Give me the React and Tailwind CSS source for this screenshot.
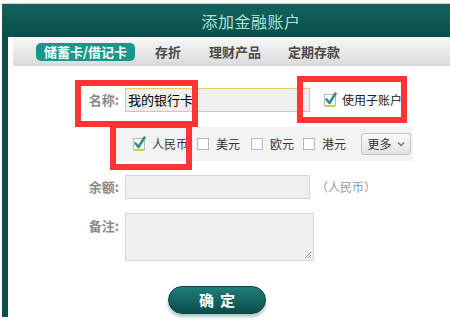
import React from "react";

const font = { fontFamily: '"Noto Sans CJK SC", "Liberation Sans", sans-serif' };

const CheckBox = ({ checked }) => (
    <svg width="12" height="12" viewBox="0 0 12 12" className="shrink-0 overflow-visible">
        <rect x="0.5" y="0.5" width="11" height="11" fill="#fff" stroke="#b8b8b8" />
        {checked && (
            <>
                <line x1="1" y1="12.5" x2="11" y2="12.5" stroke="#c8d84a" strokeWidth="1" />
                <path d="M2.5 5.5 L5.5 9 L11.5 -0.5" fill="none" stroke="#2f8f86" strokeWidth="2.6" strokeLinecap="round" strokeLinejoin="round" />
            </>
        )}
    </svg>
);

const Currency = ({ label, checked, className = "" }) => (
    <label className={`flex items-center gap-[7px] shrink-0 whitespace-nowrap ${className}`}>
        <CheckBox checked={checked} />
        <span className="text-[12px] text-[#333]">{label}</span>
    </label>
);

const App = () => {
    return (
        <div className="w-[450px] h-[327px] bg-white overflow-hidden relative whitespace-nowrap" style={font}>
            <div className="ml-[2px] mt-[3px] border-t border-[#c9d6d4]">
                {/* title bar */}
                <div className="h-[33px] bg-gradient-to-b from-[#14625c] to-[#0a4f4a] flex items-center justify-center pl-[50px]">
                    <span className="text-[16px] text-[#a6e3da] tracking-[0.5px]">添加金融账户</span>
                </div>

                <div className="flex">
                    <div className="w-[6px] h-[280px] bg-[#0d4e49]" />
                    <div className="flex-1 bg-white">
                        {/* tabs */}
                        <div className="ml-[5px] h-[29px] bg-gradient-to-b from-[#f8f8f8] to-[#dadada] flex items-center font-bold text-[13px] text-[#4a4a4a]">
                            <span className="ml-[23px] h-[18px] px-[8px] rounded-[5px] bg-[#1a978c] text-white flex items-center leading-none">储蓄卡/借记卡</span>
                            <span className="ml-[20px]">存折</span>
                            <span className="ml-[28px]">理财产品</span>
                            <span className="ml-[27px]">定期存款</span>
                        </div>

                        {/* name row */}
                        <div className="mt-[22px] flex items-center">
                            <span className="w-[117px] pr-[6px] text-right text-[13px] font-bold text-[#8a8a8a]">名称:</span>
                            <div className="w-[185px] h-[24px] bg-[#efefef] border border-[#efc46a] flex items-center px-[2px] text-[13px] text-black">
                                我的银行卡<span className="w-px h-[16px] bg-black" />
                            </div>
                            <label className="ml-[14px] flex items-center gap-[6px]">
                                <CheckBox checked />
                                <span className="text-[12px] text-[#222]">使用子账户</span>
                            </label>
                        </div>

                        {/* currency bar */}
                        <div className="mt-[15px] ml-[108px] w-[297px] h-[34px] bg-[#f3f3f3] flex items-center pl-[17px]">
                            <Currency label="人民币" checked />
                            <Currency label="美元" className="ml-[9px]" />
                            <Currency label="欧元" className="ml-[11px]" />
                            <Currency label="港元" className="ml-[9px]" />
                            <button className="ml-[15px] shrink-0 w-[50px] h-[22px] rounded-[3px] border border-[#c4c4c4] bg-gradient-to-b from-[#fafafa] to-[#e2e2e2] flex items-center justify-center gap-[5px] text-[12px] text-[#333]">
                                更多
                                <svg width="8" height="6" viewBox="0 0 8 6">
                                    <path d="M1 1.5 L4 4.5 L7 1.5" fill="none" stroke="#777" strokeWidth="1.5" />
                                </svg>
                            </button>
                        </div>

                        {/* balance row */}
                        <div className="mt-[14px] flex items-center">
                            <span className="w-[117px] pr-[6px] text-right text-[13px] font-bold text-[#8a8a8a]">余额:</span>
                            <div className="w-[185px] h-[24px] bg-[#efefef] border border-[#d6d6d6]" />
                            <span className="ml-[6px] text-[12px] text-[#999]">（人民币）</span>
                        </div>

                        {/* note row */}
                        <div className="mt-[14px] flex items-start">
                            <span className="w-[117px] pr-[6px] pt-[3px] text-right text-[13px] font-bold text-[#8a8a8a]">备注:</span>
                            <div className="relative w-[189px] h-[48px] bg-[#efefef] border border-[#d6d6d6]">
                                <svg width="8" height="8" viewBox="0 0 8 8" className="absolute right-[1px] bottom-[1px]">
                                    <path d="M7 1 L1 7 M7 4 L4 7" stroke="#999" strokeWidth="1" />
                                </svg>
                            </div>
                        </div>

                        {/* submit */}
                        <div className="mt-[25px] ml-[160px]">
                            <button className="w-[98px] h-[28px] rounded-full bg-gradient-to-b from-[#1f7f79] to-[#0b4d49] text-white font-bold text-[15px] tracking-[6px] pl-[6px] shadow-[0_3px_3px_rgba(120,170,165,0.6)] border border-[#0a3f3c]">
                                确定
                            </button>
                        </div>
                    </div>
                </div>
            </div>

            {/* red annotation boxes */}
            <div className="absolute left-[75px] top-[80px] w-[123px] h-[47px] border-[6px] border-[#ff3535]" />
            <div className="absolute left-[297px] top-[76px] w-[110px] h-[47px] border-[6px] border-[#ff3535]" />
            <div className="absolute left-[110px] top-[122px] w-[82px] h-[48px] border-[6px] border-[#ff3535]" />
        </div>
    );
};

export default App;
